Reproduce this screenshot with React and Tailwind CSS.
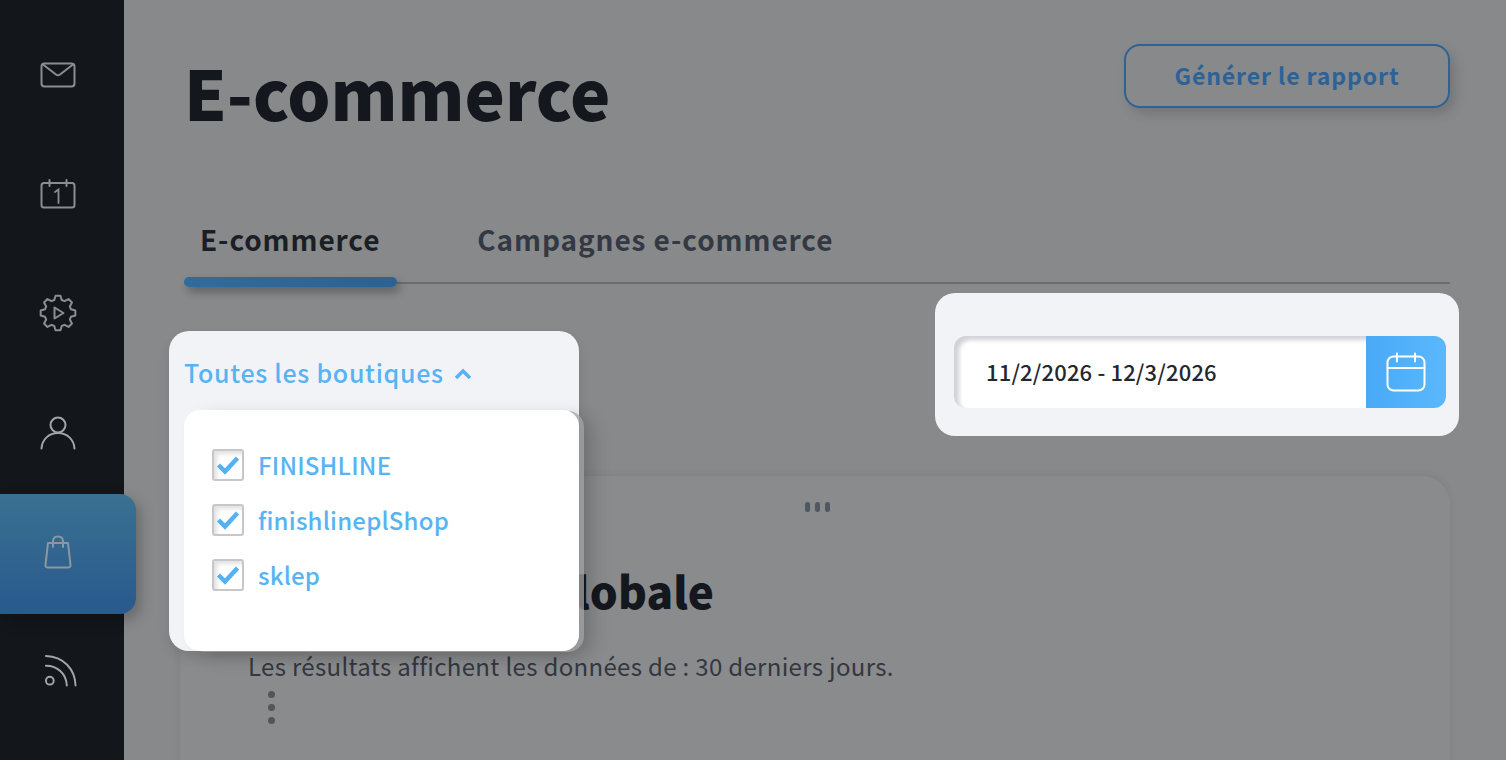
const font = { fontFamily: '"Noto Sans CJK JP", "Noto Sans", sans-serif' };

// eight flat teeth around the centre of the 38px box
const gearPath = () => {
  const pt = (r, deg) => {
    const a = ((deg - 90) * Math.PI) / 180;
    return `${(19 + r * Math.cos(a)).toFixed(2)} ${(19 + r * Math.sin(a)).toFixed(2)}`;
  };
  let d = "";
  for (let i = 0; i < 8; i++) {
    const c = i * 45;
    d += `${i ? "L" : "M"}${pt(17.5, c - 8)} L${pt(17.5, c + 8)} L${pt(13.5, c + 16)} L${pt(13.5, c + 29)} `;
  }
  return d + "Z";
};

const MailIcon = () => (
  <svg width="36" height="26" viewBox="0 0 36 26" fill="none" stroke="#8b8d90" strokeWidth="2" strokeLinecap="round" strokeLinejoin="round" className="mt-[2px]">
    <rect x="1.500" y="1.500" width="33" height="23" rx="3" />
    <path d="M3 2.500 16 12.500c1.200.9 2.800.9 4 0L33 2.500" />
  </svg>
);

const CalendarOneIcon = () => (
  <svg width="36" height="30" viewBox="0 0 36 30" fill="none" stroke="#8b8d90" strokeWidth="2" strokeLinecap="round">
    <rect x="1.500" y="4" width="33" height="24.500" rx="2.500" />
    <path d="M9.500 1v6M26.500 1v6" />
    <path d="M15 13l3.500-2.500V24" strokeWidth="1.800" />
  </svg>
);

const GearPlayIcon = () => (
  <svg width="38" height="38" viewBox="0 0 38 38" fill="none" stroke="#8b8d90" strokeWidth="2" strokeLinejoin="round" className="mt-[-2px]">
    <path d={gearPath()} />
    <path d="M15.500 13.500v11l9-5.500z" />
  </svg>
);

const UserIcon = () => (
  <svg width="36" height="34" viewBox="0 0 36 34" fill="none" stroke="#a3a5a8" strokeWidth="2" strokeLinecap="round" className="mt-[-3px]">
    <circle cx="18" cy="9" r="7.500" />
    <path d="M1.500 32.500C2 23.500 9 17 18 17s16 6.500 16.500 15.500" />
  </svg>
);

const BagIcon = () => (
  <svg width="28" height="34" viewBox="0 0 28 34" fill="none" stroke="#8e979f" strokeWidth="2" strokeLinecap="round" strokeLinejoin="round" className="mt-[-4px] ml-[-2px]">
    <path d="M4 8h20l2.500 22c.2 1.500-.8 2.500-2.300 2.500H3.800c-1.500 0-2.500-1-2.300-2.500z" />
    <path d="M9 12V6.500C9 3.500 11 1.500 14 1.500s5 2 5 5V12" />
  </svg>
);

const RssIcon = () => (
  <svg width="33" height="34" viewBox="0 0 34 34" fill="none" stroke="#a3a5a8" strokeWidth="2" strokeLinecap="round" className="mt-[-6px] ml-[4px]">
    <circle cx="6" cy="27" r="4" />
    <path d="M2 11.500C14 11.500 23 20 23.500 32" />
    <path d="M2 1.500C20 2 32 15 32.500 32" />
  </svg>
);

const CalendarIcon = () => (
  <svg width="40" height="40" viewBox="0 0 40 40" fill="none" stroke="#ffffff" strokeWidth="2" strokeLinecap="round">
    <rect x="1.500" y="4.500" width="37" height="34" rx="6" />
    <path d="M1.500 16h37M11 1.500v8M29 1.500v8" />
  </svg>
);

const Check = () => (
  <svg width="24" height="20" viewBox="0 0 24 20" fill="none" stroke="#53b1f5" strokeWidth="4.500">
    <path d="M2.500 10l6.500 6.500L21.500 3" />
  </svg>
);

const navItems = [
  { icon: <MailIcon /> },
  { icon: <CalendarOneIcon /> },
  { icon: <GearPlayIcon /> },
  { icon: <UserIcon /> },
  { icon: <BagIcon />, active: true },
  { icon: <RssIcon /> },
];

const shops = ["FINISHLINE", "finishlineplShop", "sklep"];

const Sidebar = () => (
  <aside className="relative z-10 w-[124px] shrink-0 bg-[#13161b] pt-[14px]">
    {navItems.map((item, i) => (
      <div
        key={i}
        className={
          item.active
            ? "flex h-[120px] w-[136px] items-center justify-center pr-[18px] rounded-r-[16px] bg-gradient-to-b from-[#3a7190] to-[#29598e] shadow-[4px_6px_14px_rgba(0,0,0,0.25)]"
            : "flex h-[120px] w-[116px] items-center justify-center"
        }
      >
        {item.icon}
      </div>
    ))}
  </aside>
);

const ShopPopover = () => (
  <div className="absolute left-[-15px] top-[47px] z-20 h-[320px] w-[410px] rounded-[20px] bg-[#f2f3f7] shadow-[0_6px_12px_rgba(0,0,0,0.1)]">
    <div className="flex h-[79px] items-center gap-[10px] pl-[15px] pt-[4px] text-[25px] font-medium tracking-[0.7px] text-[#58b3f3]">
      Toutes les boutiques
      <svg width="18" height="12" viewBox="0 0 18 12" fill="none" stroke="#58b3f3" strokeWidth="3.500" className="mt-[2px]">
        <path d="M2 10l7-7 7 7" />
      </svg>
    </div>
    <div className="ml-[15px] h-[241px] rounded-[16px] bg-white pl-[28px] pt-[39px] shadow-[5px_1px_0_rgba(165,165,167,0.75),14px_6px_18px_rgba(0,0,0,0.16)]">
      {shops.map((shop) => (
        <label key={shop} className="mb-[23px] flex h-[32px] items-center gap-[14px] text-[24px] font-medium tracking-[0.2px] text-[#58b3f3]">
          <span className="flex h-[32px] w-[32px] items-center justify-center rounded-[3px] border-2 border-[#c6c7ca] bg-white shadow-[inset_3px_3px_4px_rgba(0,0,0,0.12)]">
            <Check />
          </span>
          {shop}
        </label>
      ))}
    </div>
  </div>
);

const DateCard = () => (
  <div className="ml-auto mr-[-9px] mt-[9px] flex h-[143px] w-[524px] items-end rounded-[20px] bg-[#f2f3f7] pb-[28px] pl-[19px] pr-[13px]">
    <div className="flex h-[72px] flex-1 items-center overflow-hidden rounded-[12px] bg-white shadow-[inset_5px_4px_4px_rgba(150,155,170,0.45)]">
      <span className="flex-1 pb-[1px] pl-[32px] text-[22px] font-medium tracking-[0.15px] text-[#24272e]">11/2/2026 - 12/3/2026</span>
      <span className="flex h-[72px] w-[80px] items-center justify-center bg-gradient-to-r from-[#4aa9f6] to-[#5ab8fd]">
        <CalendarIcon />
      </span>
    </div>
  </div>
);

export default function App() {
  return (
    <div className="flex h-screen overflow-hidden bg-[#88898b]" style={font}>
      <Sidebar />
      <main className="min-w-0 flex-1 pl-[60px] pr-[56px]">
        <header className="flex h-[190px] items-start justify-between">
          <h1 className="mt-[42px] text-[68px] font-black leading-[100px] text-[#14171d]">E-commerce</h1>
          <button className="mt-[44px] h-[64px] w-[326px] rounded-[16px] border-2 border-[#2c6297] pb-[1px] text-[23px] font-semibold tracking-[0.9px] text-[#2c6297] shadow-[5px_6px_12px_rgba(0,0,0,0.15)]">
            Générer le rapport
          </button>
        </header>

        <nav className="relative flex h-[94px] items-center border-b-2 border-[#6c6d70] pt-[6px] text-[28px] font-bold tracking-[0.9px]">
          <span className="ml-[16px] text-[#1a1e25]">E-commerce</span>
          <span className="ml-[97px] text-[#333943]">Campagnes e-commerce</span>
          <span className="absolute bottom-[-5px] left-0 h-[10px] w-[213px] rounded-full bg-gradient-to-r from-[#2f6c9c] to-[#2c6193] shadow-[3px_5px_8px_rgba(0,0,0,0.3)]" />
        </nav>

        <div className="relative flex h-[192px] items-start">
          <ShopPopover />
          <DateCard />
        </div>

        <section className="relative ml-[-4px] h-[400px] rounded-t-[28px] bg-[#8a8b8d] pl-[68px] shadow-[0_-2px_8px_rgba(0,0,0,0.06)]">
          <div className="ml-[-68px] flex justify-center gap-[5px] pl-[4px] pt-[26px]">
            <span className="h-[10px] w-[5px] rounded-full bg-[#4f5760]" />
            <span className="h-[10px] w-[5px] rounded-full bg-[#4f5760]" />
            <span className="h-[10px] w-[5px] rounded-full bg-[#4f5760]" />
          </div>
          <h2 className="mt-[46px] text-[44px] font-black leading-[64px] tracking-[0.1px] text-[#14171d]">Performance globale</h2>
          <p className="mt-[28px] text-[24px] leading-[32px] tracking-[0.33px] text-[#33373f]">
            Les résultats affichent les données de : 30 derniers jours.
          </p>
          <div className="ml-[20px] mt-[9px] flex w-[7px] flex-col gap-[6px]">
            <span className="h-[7px] w-[7px] rounded-full bg-[#52555c]" />
            <span className="h-[7px] w-[7px] rounded-full bg-[#52555c]" />
            <span className="h-[7px] w-[7px] rounded-full bg-[#52555c]" />
          </div>
        </section>
      </main>
    </div>
  );
}
